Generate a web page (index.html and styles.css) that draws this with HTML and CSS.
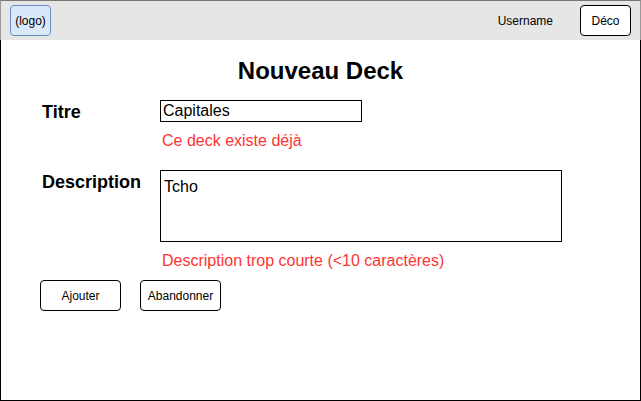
FILE: index.html
```html
<!DOCTYPE html>
<html lang="fr">
<head>
<meta charset="utf-8">
<title>Nouveau Deck</title>
<link rel="stylesheet" href="styles.css">
</head>
<body>
<div class="frame">
  <header class="topbar">
    <div class="logo">(logo)</div>
    <div class="spacer"></div>
    <span class="user">Username</span>
    <button class="btn deco">Déco</button>
  </header>
  <main class="content">
    <h1 class="title">Nouveau Deck</h1>
    <div class="field">
      <label class="label">Titre</label>
      <div class="control">
        <div class="input">Capitales</div>
        <div class="error">Ce deck existe déjà</div>
      </div>
    </div>
    <div class="field field-desc">
      <label class="label">Description</label>
      <div class="control">
        <div class="textarea">Tcho</div>
        <div class="error">Description trop courte (&lt;10 caractères)</div>
      </div>
    </div>
    <div class="actions">
      <button class="btn action">Ajouter</button>
      <button class="btn action">Abandonner</button>
    </div>
  </main>
</div>
</body>
</html>
```
FILE: styles.css
```css
* { box-sizing: border-box; }
html, body { margin: 0; padding: 0; background: #fff; }
body { font-family: "Liberation Sans", Arial, Helvetica, sans-serif; color: #000; }

.frame {
  width: 641px;
  height: 401px;
  display: flex;
  flex-direction: column;
}

.topbar {
  height: 40px;
  flex: 0 0 40px;
  background: #e6e6e6;
  border-top: 1px solid #777;
  border-left: 1px solid #999;
  border-right: 1px solid #999;
  display: flex;
  align-items: center;
  padding: 0 9px 0 9px;
}
.logo {
  width: 41px;
  height: 31px;
  background: #dae8fc;
  border: 1px solid #6c8ebf;
  border-radius: 4px;
  font-size: 12px;
  display: flex;
  align-items: center;
  justify-content: center;
}
.spacer { flex: 1; }
.user { font-size: 12px; margin-right: 27px; }

.btn {
  font-family: "Liberation Sans", Arial, Helvetica, sans-serif;
  font-size: 12px;
  color: #000;
  background: #fff;
  border: 1px solid #000;
  border-radius: 4px;
  padding: 0;
  height: 31px;
  display: flex;
  align-items: center;
  justify-content: center;
}
.deco { width: 51px; }

.content {
  flex: 1;
  border-left: 1px solid #000;
  border-right: 1px solid #000;
  border-bottom: 1px solid #000;
  padding: 17px 0 0 39px;
}
.title {
  margin: 0 0 0 -39px;
  font-size: 24px;
  line-height: 28px;
  font-weight: bold;
  text-align: center;
}

.field {
  display: flex;
  margin-top: 15px;
}
.field-desc { margin-top: 20px; }
.label {
  width: 120px;
  padding-left: 2px;
  padding-top: 1px;
  font-size: 18px;
  line-height: 22px;
  font-weight: bold;
}
.control { display: flex; flex-direction: column; }
.input {
  width: 202px;
  height: 22px;
  border: 1px solid #000;
  padding: 1px 2px 0;
  font-size: 16px;
  line-height: 18px;
}
.textarea {
  width: 402px;
  height: 72px;
  border: 1px solid #000;
  padding: 7px 3px;
  font-size: 16px;
  line-height: 18px;
}
.error {
  margin-top: 10px;
  padding-left: 2px;
  color: #ff3333;
  font-size: 16px;
  line-height: 18px;
}

.actions {
  display: flex;
  gap: 19px;
  margin-top: 10px;
}
.action { width: 81px; }
```
